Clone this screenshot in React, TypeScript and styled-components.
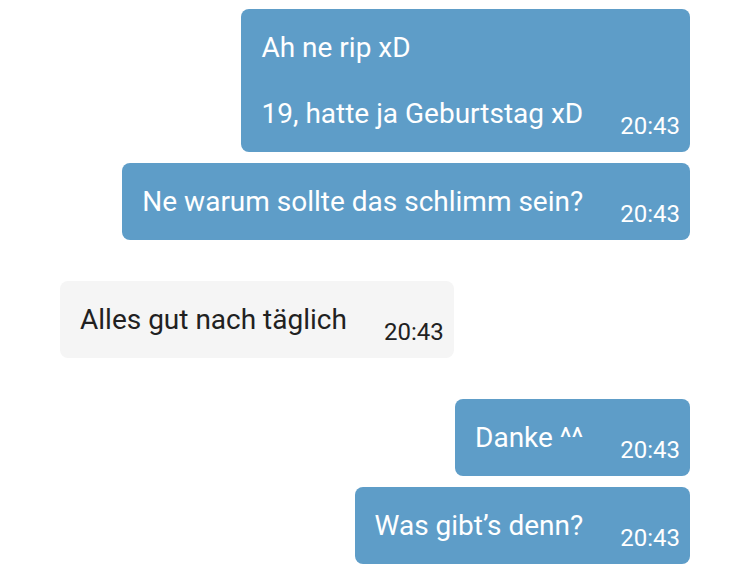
import React from 'react'
import styled, { createGlobalStyle } from 'styled-components'

const messages = [
    { id: 1, mine: true, text: 'Ah ne rip xD\n\n19, hatte ja Geburtstag xD', time: '20:43' },
    { id: 2, mine: true, text: 'Ne warum sollte das schlimm sein?', time: '20:43' },
    { id: 3, mine: false, text: 'Alles gut nach täglich', time: '20:43' },
    { id: 4, mine: true, text: 'Danke ^^', time: '20:43' },
    { id: 5, mine: true, text: 'Was gibt’s denn?', time: '20:43' },
]

export default function App() {
    return (
        <>
            <GlobalStyle />
            <Chat>
                {messages.map((m, i) => {
                    const prev = messages[i - 1]
                    const grouped = prev && prev.mine === m.mine
                    return (
                        <Row key={m.id} $mine={m.mine} $first={i === 0} $grouped={!!grouped}>
                            <Bubble $mine={m.mine}>
                                <Text>{m.text}</Text>
                                <Time>{m.time}</Time>
                            </Bubble>
                        </Row>
                    )
                })}
            </Chat>
        </>
    )
}

const GlobalStyle = createGlobalStyle`
    body {
        margin: 0;
        background: #ffffff;
        font-family: Roboto, "Noto Sans", sans-serif;
    }
`

const Chat = styled.div`
    display: flex;
    flex-direction: column;
    padding: 9px 60px 0 60px;
`

const Row = styled.div<{ $mine: boolean; $first: boolean; $grouped: boolean }>`
    display: flex;
    justify-content: ${p => (p.$mine ? 'flex-end' : 'flex-start')};
    margin-top: ${p => (p.$first ? 0 : p.$grouped ? 11 : 41)}px;
`

const Bubble = styled.div<{ $mine: boolean }>`
    display: flex;
    align-items: flex-end;
    padding: 22px 10px 0 20px;
    border-radius: 8px;
    background: ${p => (p.$mine ? '#5e9dc8' : '#f5f5f5')};
    color: ${p => (p.$mine ? '#ffffff' : '#212121')};
`

const Text = styled.div`
    padding-bottom: 22px;
    font-size: 28px;
    line-height: 33px;
    white-space: pre-line;
`

const Time = styled.div`
    margin: 0 0 14px 37px;
    font-size: 24px;
    line-height: 24px;
    white-space: nowrap;
`
